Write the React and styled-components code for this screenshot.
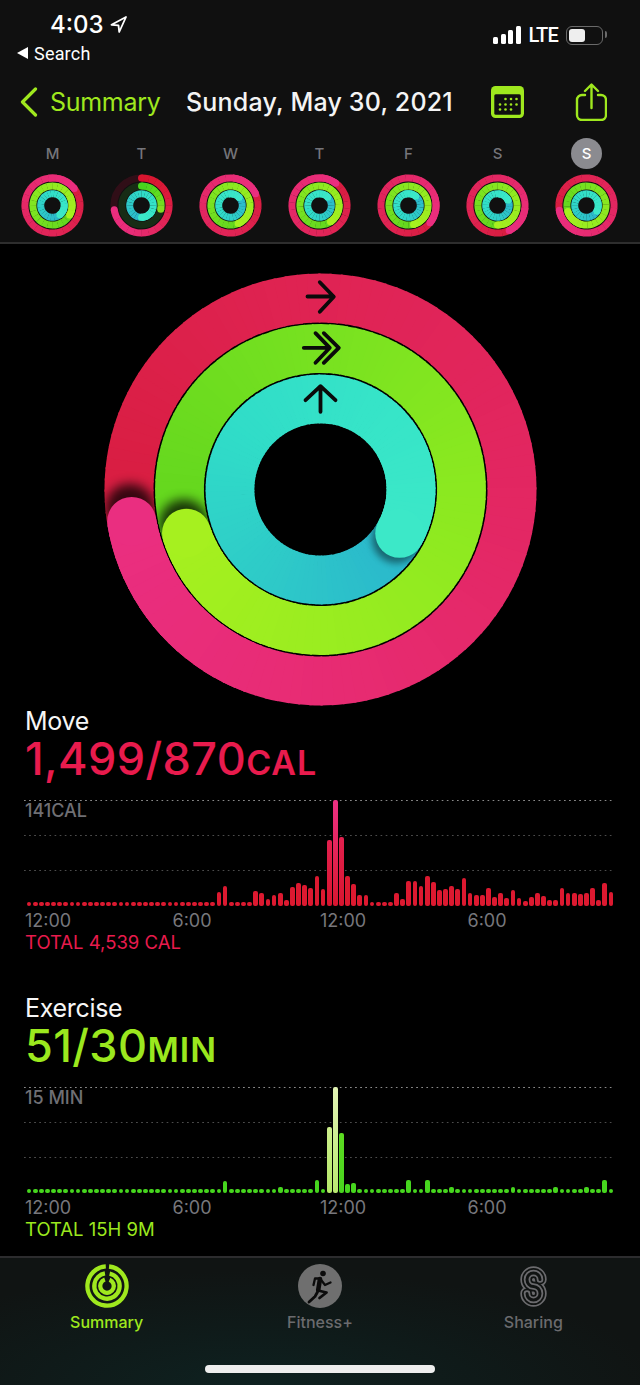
import React, { useId } from "react";
import styled, { createGlobalStyle } from "styled-components";

const GlobalStyle = createGlobalStyle`
  html, body {
    margin: 0;
    padding: 0;
    background: #000;
  }
  * {
    box-sizing: border-box;
  }
`;

const lime = "#9fe81e";
const font = `Inter, "Liberation Sans", sans-serif`;

// ring colour stops, from just after the cap round to the cap itself
const palettes = {
  move: ["#d81d40", "#df2352", "#e22660", "#e72b72", "#ea2e80"],
  exercise: ["#62d61e", "#74e020", "#88e820", "#98ec20", "#a6f01f"],
  stand: ["#2ab6cc", "#2ecac8", "#30dcc8", "#36e4c8", "#3ce8c8"],
};

// first-lap arcs on a dim track, as on the Tuesday rings
const firstLapStyle = {
  move: { track: "#300e17", stops: ["#d8152f", "#dc1c3c", "#e2265c", "#e82c78", "#ea2e80"] },
  exercise: { track: "#172c15", stops: ["#48d61e", "#55da1f", "#62dc20", "#72dc21", "#84dc22"] },
};

const bigGeometry = { size: 433, stroke: [49, 48.8, 48.8], radius: [191.5, 141, 90.5] };
const smallGeometry = { size: 63, stroke: [7, 7, 7], radius: [27.6, 19.6, 11.8] };

const weekDays = [
  { letter: "M", ends: [52, 119, 142] },
  { letter: "T", ends: [261, 101, 180], firstLap: true },
  { letter: "W", ends: [65, 157, 48] },
  { letter: "T", ends: [36, 146, 45] },
  { letter: "F", ends: [129, 165, 38] },
  { letter: "S", ends: [155, 180, 63] },
  { letter: "S", ends: [260, 252, 119], current: true },
];

const moveBars = [
  ...Array(31).fill(4.5), 14, 20, 4.5, 4.5, 4.5, 4.5, 15, 13, 7, 11, 13, 6, 19, 23, 21, 18, 30, 17, 66, 106, 69,
  30, 22, 11, 11, 4.5, 4.5, 4.5, 4.5, 13, 7, 25, 25, 20, 30, 24, 16, 17, 20, 17, 28, 13, 11, 11, 18, 9, 13, 8,
  16, 8, 5, 9, 13, 10, 6, 6, 18, 13, 13, 12, 13, 18, 6, 23, 14,
];

const exerciseBars = Array(96).fill(4.5);
Object.entries({
  32: 12, 41: 6, 47: 13, 49: 66, 50: 106, 51: 60, 52: 9, 53: 10, 62: 13, 65: 13, 69: 6, 79: 6, 86: 6, 91: 6, 94: 13,
}).forEach(([i, h]) => {
  exerciseBars[i] = h;
});

const mix = (a, b, t) => {
  const pa = [1, 3, 5].map((i) => parseInt(a.slice(i, i + 2), 16));
  const pb = [1, 3, 5].map((i) => parseInt(b.slice(i, i + 2), 16));
  return `rgb(${pa.map((v, i) => Math.round(v + (pb[i] - v) * t)).join(",")})`;
};

const colorAt = (stops, t) => {
  const pos = Math.min(t, 0.9999) * (stops.length - 1);
  const i = Math.floor(pos);
  return mix(stops[i], stops[i + 1], pos - i);
};

const point = (r, deg) => {
  const a = ((deg - 90) * Math.PI) / 180;
  return [r * Math.cos(a), r * Math.sin(a)];
};

const arc = (r, from, to) => {
  const [x0, y0] = point(r, from);
  const [x1, y1] = point(r, to);
  return `M${x0} ${y0}A${r} ${r} 0 ${to - from > 180 ? 1 : 0} 1 ${x1} ${y1}`;
};

function GradientArc({ r, stroke, stops, from, to, lapStart, span, step }) {
  const parts = [];
  for (let a = from; a < to; a += step) {
    const end = Math.min(a + step + 0.6, to);
    parts.push(
      <path
        key={a}
        d={arc(r, a, end)}
        fill="none"
        stroke={colorAt(stops, (a - lapStart) / span)}
        strokeWidth={stroke}
      />
    );
  }
  return parts;
}

function RingBand({ name, r, stroke, end, firstLap, shadow }) {
  const id = useId();
  const stops = palettes[name];
  const step = shadow ? 3 : 15;
  const [capX, capY] = point(r, end);
  const [shadowX, shadowY] = point(r, end + 4);

  if (firstLap && firstLapStyle[name]) {
    const lap = firstLapStyle[name];
    const [startX, startY] = point(r, 0);
    return (
      <g>
        <circle r={r} fill="none" stroke={lap.track} strokeWidth={stroke} />
        <GradientArc r={r} stroke={stroke} stops={lap.stops} from={0} to={end} lapStart={0} span={end} step={step} />
        <circle cx={startX} cy={startY} r={stroke / 2} fill={lap.stops[0]} />
        <circle cx={capX} cy={capY} r={stroke / 2} fill={lap.stops[4]} />
      </g>
    );
  }

  return (
    <g>
      <GradientArc r={r} stroke={stroke} stops={stops} from={end} to={end + 360} lapStart={end} span={360} step={step} />
      {shadow && (
        <>
          <mask id={`${id}m`} maskUnits="userSpaceOnUse" x="-217" y="-217" width="434" height="434">
            <circle r={r} fill="none" stroke="#fff" strokeWidth={stroke} />
          </mask>
          <filter id={`${id}b`} x="-60%" y="-60%" width="220%" height="220%">
            <feGaussianBlur stdDeviation={name === "stand" ? 3.5 : 5.5} />
          </filter>
          <g mask={`url(#${id}m)`}>
            <circle
              cx={shadowX}
              cy={shadowY}
              r={stroke / 2}
              fill="#000"
              opacity={name === "stand" ? 0.45 : 0.75}
              filter={`url(#${id}b)`}
            />
          </g>
        </>
      )}
      <GradientArc r={r} stroke={stroke} stops={stops} from={end + 300} to={end + 360} lapStart={end} span={360} step={step} />
      <circle cx={capX} cy={capY} r={stroke / 2} fill={stops[4]} />
    </g>
  );
}

function Rings({ geometry, ends, firstLap, shadow, children }) {
  const { size, stroke, radius } = geometry;
  return (
    <svg width={size} height={size} viewBox={`${-size / 2} ${-size / 2} ${size} ${size}`}>
      {["move", "exercise", "stand"].map((name, i) => (
        <RingBand key={name} name={name} r={radius[i]} stroke={stroke[i]} end={ends[i]} firstLap={firstLap} shadow={shadow} />
      ))}
      {children}
    </svg>
  );
}

const Screen = styled.div`
  width: 640px;
  height: 1385px;
  background: #000;
  display: flex;
  flex-direction: column;
  font-family: ${font};
  overflow: hidden;
  position: relative;
`;

const Header = styled.header`
  height: 244px;
  background: #101010;
  border-bottom: 2px solid #2e2e2e;
`;

const StatusBar = styled.div`
  height: 70px;
  padding: 10px 37px 0 17px;
  display: flex;
  justify-content: space-between;
  align-items: flex-start;
  color: #fff;
`;

const StatusLeft = styled.div`
  display: flex;
  flex-direction: column;
  gap: 5px;
`;

const TimeRow = styled.div`
  display: flex;
  align-items: center;
  gap: 6px;
  margin-left: 33px;
  height: 28px;
  font-size: 24px;
  font-weight: 500;
`;

const BackToSearch = styled.div`
  display: flex;
  align-items: center;
  gap: 6px;
  height: 20px;
  font-size: 18px;
  font-family: Roboto, sans-serif;
  letter-spacing: 0.2px;
`;

const BackTriangle = styled.span`
  width: 0;
  height: 0;
  border-top: 6px solid transparent;
  border-bottom: 6px solid transparent;
  border-right: 11px solid #fff;
`;

const StatusRight = styled.div`
  display: flex;
  align-items: center;
  margin-top: 15px;
  height: 20px;
`;

const Signal = styled.div`
  display: flex;
  align-items: flex-end;
  gap: 2.5px;
  height: 18px;
  margin-right: 8px;
`;

const SignalBar = styled.span`
  width: 5px;
  height: ${(p) => p.$h}px;
  background: #fff;
  border-radius: 1.5px;
`;

const Lte = styled.span`
  font-family: Roboto, sans-serif;
  font-size: 20px;
  font-weight: 500;
  letter-spacing: -0.8px;
  margin-right: 8px;
`;

const Battery = styled.div`
  position: relative;
  width: 37px;
  height: 19px;
  border: 1.5px solid #6a6a6a;
  border-radius: 6px;
  padding: 2px;
  &::after {
    content: "";
    position: absolute;
    right: -4.5px;
    top: 4.5px;
    width: 2px;
    height: 7px;
    background: #6a6a6a;
    border-radius: 0 2px 2px 0;
  }
`;

const BatteryLevel = styled.div`
  width: 16px;
  height: 100%;
  background: #eee;
  border-radius: 3px;
`;

const NavBar = styled.nav`
  height: 64px;
  padding: 0 33px 0 20px;
  display: flex;
  align-items: center;
`;

const BackLabel = styled.span`
  margin-left: 12px;
  color: ${lime};
  font-size: 25px;
  letter-spacing: -0.3px;
  width: 111px;
  white-space: nowrap;
`;

const NavTitle = styled.h1`
  margin: 0 0 0 25px;
  color: #f4f4f4;
  font-size: 25px;
  font-weight: 500;
  letter-spacing: 0.2px;
  white-space: nowrap;
`;

const NavActions = styled.div`
  margin-left: auto;
  display: flex;
  align-items: center;
  gap: 51px;
`;

const WeekGrid = styled.div`
  display: grid;
  grid-template-columns: repeat(7, 89px);
  padding: 0 8px;
`;

const DayColumn = styled.div`
  display: flex;
  flex-direction: column;
  align-items: center;
  gap: 2px;
`;

const DayLetter = styled.span`
  width: 31px;
  height: 38px;
  display: flex;
  align-items: center;
  justify-content: center;
  font-size: 15px;
  font-weight: 500;
  color: ${(p) => (p.$current ? "#fff" : "#75757a")};
  position: relative;
  z-index: 0;
  &::before {
    content: "";
    display: ${(p) => (p.$current ? "block" : "none")};
    position: absolute;
    z-index: -1;
    left: 0;
    top: 3.5px;
    width: 31px;
    height: 31px;
    border-radius: 50%;
    background: #8b8b90;
  }
`;

const HeroRings = styled.div`
  height: 463px;
  padding-top: 29px;
  display: flex;
  justify-content: center;
`;

const Metric = styled.section`
  padding: 0 26px;
  & + & {
    margin-top: 42px;
  }
`;

const MetricName = styled.div`
  height: 28px;
  line-height: 28px;
  font-size: 25px;
  color: #f6f6f6;
  letter-spacing: -0.3px;
  margin-left: -1px;
`;

const MetricValue = styled.div`
  height: 47px;
  line-height: 47px;
  font-size: 45px;
  font-weight: 500;
  color: ${(p) => p.$color};
  white-space: nowrap;
  letter-spacing: 0.4px;
  margin-left: -1px;
`;

const MetricUnit = styled.span`
  font-size: 34px;
  font-weight: 600;
  letter-spacing: 1px;
`;

const Plot = styled.div`
  position: relative;
  margin-top: 18px;
  height: 106px;
`;

const PlotGrid = styled.div`
  position: absolute;
  top: 0;
  left: -2px;
  right: 0;
  display: flex;
  flex-direction: column;
  gap: 34px;
`;

const PlotLine = styled.div`
  height: 1px;
  background-image: linear-gradient(90deg, ${(p) => (p.$strong ? "#8a8a8a" : "#4c4c4c")} 1.5px, transparent 1.5px);
  background-size: 5.1px 1px;
`;

const PlotMax = styled.span`
  position: absolute;
  top: 2px;
  left: -1px;
  line-height: 18px;
  font-size: 18px;
  font-weight: 500;
  color: #6f6f74;
`;

const Bars = styled.div`
  position: absolute;
  inset: 0;
  display: grid;
  grid-template-columns: repeat(96, 1fr);
  align-items: end;
`;

const Bar = styled.div`
  width: 4.7px;
  justify-self: center;
  border-radius: 2px;
  background: ${(p) => p.$fill};
`;

const Ticks = styled.div`
  margin: 5px 0 0 -1px;
  display: grid;
  grid-template-columns: repeat(4, 147.5px);
  height: 20px;
  line-height: 20px;
  font-size: 18px;
  color: #77777c;
`;

const MetricTotal = styled.div`
  margin: 1px 0 0 -1px;
  height: 20px;
  line-height: 20px;
  font-size: 18.5px;
  color: ${(p) => p.$color};
`;

const TabBar = styled.footer`
  margin-top: auto;
  height: 129px;
  border-top: 2px solid #2c2c2e;
  padding-top: 6px;
  background: radial-gradient(ellipse 70% 100% at 40% 100%, #0e2120 0%, #101413 90%);
  display: grid;
  grid-template-columns: repeat(3, 1fr);
  align-items: start;
`;

const Tab = styled.div`
  display: flex;
  flex-direction: column;
  align-items: center;
  color: ${(p) => (p.$active ? lime : "#6b6b6e")};
  font-size: 16px;
  font-weight: 500;
`;

const TabIcon = styled.div`
  height: 44px;
  display: flex;
  align-items: center;
  justify-content: center;
  margin-bottom: 4px;
`;

const HomeIndicator = styled.div`
  position: absolute;
  left: 205px;
  bottom: 12px;
  width: 230px;
  height: 8px;
  border-radius: 4px;
  background: #eee;
`;

function CalendarIcon() {
  const dots = [
    [14.5, 13], [20, 13], [25.5, 13],
    [9, 18.5], [14.5, 18.5], [20, 18.5], [25.5, 18.5],
    [9, 23.5], [14.5, 23.5], [20, 23.5],
  ];
  return (
    <svg width="33" height="32" viewBox="0 0 33 32">
      <rect width="33" height="32" rx="4.5" fill={lime} />
      <rect x="3.3" y="8.3" width="26.5" height="20.5" rx="1.5" fill="#101010" />
      {dots.map(([cx, cy]) => (
        <circle key={`${cx}-${cy}`} cx={cx} cy={cy} r="1.3" fill={lime} />
      ))}
    </svg>
  );
}

function ShareIcon() {
  return (
    <svg width="32" height="38" viewBox="0 0 32 38" fill="none" stroke={lime} strokeWidth="2.4" strokeLinecap="round" strokeLinejoin="round">
      <path d="M10 12H7a5 5 0 0 0-5 5v15a5 5 0 0 0 5 5h19a5 5 0 0 0 5-5V17a5 5 0 0 0-5-5h-3" />
      <path d="M16.5 2v23M10 8l6.5-6.5L23 8" />
    </svg>
  );
}

function SummaryIcon() {
  return (
    <svg width="44" height="44" viewBox="-22 -22 44 44" fill="none" stroke={lime} strokeWidth="4.3">
      <circle r="19.6" strokeDasharray="119 4.2" transform="rotate(-84)" />
      <circle r="12.7" strokeDasharray="74.6 5.2" transform="rotate(-78)" />
      <circle r="6.8" strokeDasharray="37.7 5" transform="rotate(-68)" />
    </svg>
  );
}

function RunnerIcon() {
  return (
    <svg width="44" height="44" viewBox="8 5 44 44">
      <circle cx="30" cy="27" r="22" fill="#6f6f6f" />
      <circle cx="33" cy="14.5" r="2.8" fill="#0b0b0b" />
      <g fill="none" stroke="#0b0b0b" strokeWidth="2.3" strokeLinecap="round" strokeLinejoin="round">
        <path d="M30 19.5h-5l-1.5 6.5" />
        <path d="M30 19.5l5 6.5 5.5-2.5" />
        <path d="M30 20l-1.8 11" strokeWidth="4.6" />
        <path d="M28 31.5l8.5 2-7 5.5" strokeWidth="2.8" />
        <path d="M27.5 33l-2.5 4.5-6 5.5" strokeWidth="2.8" />
      </g>
    </svg>
  );
}

function SharingIcon() {
  const s = "M20 13.5A6.5 6.5 0 0 0 7 13.5A6.5 7 0 0 0 13.5 20.5A6.5 7 0 0 1 20 27.5A6.5 6.5 0 0 1 7 27.5";
  return (
    <svg width="27" height="41" viewBox="0 0 27 41" fill="none" strokeLinecap="round">
      <path d={s} stroke="#6b6b6e" strokeWidth="13.4" />
      <path d={s} stroke="#101312" strokeWidth="10" />
      <path d={s} stroke="#6b6b6e" strokeWidth="6.6" />
      <path d={s} stroke="#101312" strokeWidth="3" />
    </svg>
  );
}

const red = "#e81b4d";
const green = "#9be81e";

const moveFill = (h) => {
  if (h > 100) return "linear-gradient(to top, #d8152f, #e0204a 35%, #ec3084)";
  if (h > 60) return "linear-gradient(to top, #d8152f, #e2204e)";
  return "#dc1930";
};

const exerciseFill = (h, i) => {
  if (i === 49) return "linear-gradient(to top, #b4e868, #cdee8c)";
  if (i === 50) return "linear-gradient(to top, #b8e870, #e2f3b4)";
  if (i === 51) return "linear-gradient(to top, #48d41e, #5cdc20)";
  return "#46d61e";
};

function MetricBlock({ name, value, unit, color, max, bars, fill, total }) {
  return (
    <Metric>
      <MetricName>{name}</MetricName>
      <MetricValue $color={color}>
        {value}
        <MetricUnit>{unit}</MetricUnit>
      </MetricValue>
      <Plot>
        <PlotGrid>
          <PlotLine $strong />
          <PlotLine />
          <PlotLine />
        </PlotGrid>
        <PlotMax>{max}</PlotMax>
        <Bars>
          {bars.map((h, i) => (
            <Bar key={i} $fill={fill(h, i)} style={{ height: h }} />
          ))}
        </Bars>
      </Plot>
      <Ticks>
        <span>12:00</span>
        <span>6:00</span>
        <span>12:00</span>
        <span>6:00</span>
      </Ticks>
      <MetricTotal $color={color}>{total}</MetricTotal>
    </Metric>
  );
}

export default function App() {
  return (
    <Screen>
      <GlobalStyle />
      <Header>
        <StatusBar>
          <StatusLeft>
            <TimeRow>
              4:03
              <svg width="17" height="17" viewBox="0 0 17 17" fill="none" stroke="#fff" strokeWidth="1.8" strokeLinejoin="round">
                <path d="M16 1L1.5 8.8l7 .6.7 6.6z" />
              </svg>
            </TimeRow>
            <BackToSearch>
              <BackTriangle />
              Search
            </BackToSearch>
          </StatusLeft>
          <StatusRight>
            <Signal>
              <SignalBar $h={7} />
              <SignalBar $h={10} />
              <SignalBar $h={14} />
              <SignalBar $h={18} />
            </Signal>
            <Lte>LTE</Lte>
            <Battery>
              <BatteryLevel />
            </Battery>
          </StatusRight>
        </StatusBar>
        <NavBar>
          <svg width="18" height="30" viewBox="0 0 18 30" fill="none" stroke={lime} strokeWidth="3.2" strokeLinecap="round" strokeLinejoin="round">
            <path d="M15.5 2L2.5 15l13 13" />
          </svg>
          <BackLabel>Summary</BackLabel>
          <NavTitle>Sunday, May 30, 2021</NavTitle>
          <NavActions>
            <CalendarIcon />
            <ShareIcon />
          </NavActions>
        </NavBar>
        <WeekGrid>
          {weekDays.map((day, i) => (
            <DayColumn key={i}>
              <DayLetter $current={day.current}>{day.letter}</DayLetter>
              <Rings geometry={smallGeometry} ends={day.ends} firstLap={day.firstLap} />
            </DayColumn>
          ))}
        </WeekGrid>
      </Header>

      <HeroRings>
        <Rings geometry={bigGeometry} ends={[260.4, 252, 119]} shadow>
          <g fill="none" stroke="#0a0a0a" strokeWidth="3.8" strokeLinecap="round" strokeLinejoin="round">
            <path d="M-13-193H13M-.7-207.3l14 14.6-14 15" />
            <path d="M-16.7-141.7H9M-5-156.3L9.3-141.7-5-126.7M3.3-156.3l15 14.6-15 15" />
            <path d="M-15-89.3L0-103.3 15-89.3M0-103.3v25.6" />
          </g>
        </Rings>
      </HeroRings>

      <MetricBlock
        name="Move"
        value="1,499/870"
        unit="CAL"
        color={red}
        max="141CAL"
        bars={moveBars}
        fill={moveFill}
        total="TOTAL 4,539 CAL"
      />
      <MetricBlock
        name="Exercise"
        value="51/30"
        unit="MIN"
        color={green}
        max="15 MIN"
        bars={exerciseBars}
        fill={exerciseFill}
        total="TOTAL 15H 9M"
      />

      <TabBar>
        <Tab $active>
          <TabIcon>
            <SummaryIcon />
          </TabIcon>
          Summary
        </Tab>
        <Tab>
          <TabIcon>
            <RunnerIcon />
          </TabIcon>
          Fitness+
        </Tab>
        <Tab>
          <TabIcon>
            <SharingIcon />
          </TabIcon>
          Sharing
        </Tab>
      </TabBar>
      <HomeIndicator />
    </Screen>
  );
}
